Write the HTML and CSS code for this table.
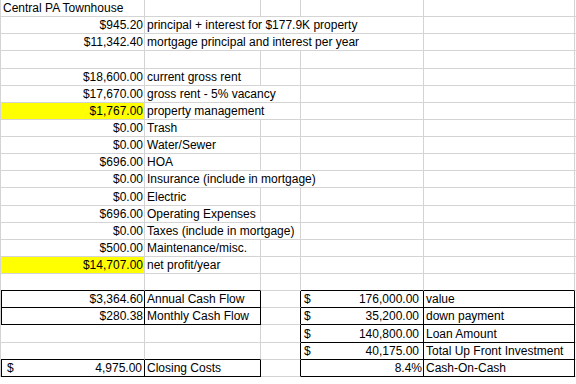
FILE: index.html
```html
<!DOCTYPE html>
<html>
<head>
  <title>Central PA Townhouse</title>
  <link rel="stylesheet" href="styles.css">
</head>
<body>
  <div class="sheet">
    <!-- row 1 -->
    <div class="c">Central PA Townhouse</div><div class="c"></div><div class="c"></div><div class="c"></div><div class="c"></div><div class="c edge"></div>
    <div class="c n">$945.20</div><div class="c span3">principal + interest for $177.9K property</div><div class="c"></div><div class="c edge"></div>
    <div class="c n">$11,342.40</div><div class="c span3">mortgage principal and interest per year</div><div class="c"></div><div class="c edge"></div>
    <div class="c"></div><div class="c"></div><div class="c"></div><div class="c"></div><div class="c"></div><div class="c edge"></div>

    <!-- income -->
    <div class="c n">$18,600.00</div><div class="c">current gross rent</div><div class="c"></div><div class="c"></div><div class="c"></div><div class="c edge"></div>
    <div class="c n">$17,670.00</div><div class="c span2">gross rent - 5% vacancy</div><div class="c"></div><div class="c"></div><div class="c edge"></div>
    <div class="c n hl">$1,767.00</div><div class="c span2">property management</div><div class="c"></div><div class="c"></div><div class="c edge"></div>

    <!-- expenses -->
    <div class="c n">$0.00</div><div class="c">Trash</div><div class="c"></div><div class="c"></div><div class="c"></div><div class="c edge"></div>
    <div class="c n">$0.00</div><div class="c">Water/Sewer</div><div class="c"></div><div class="c"></div><div class="c"></div><div class="c edge"></div>
    <div class="c n">$696.00</div><div class="c">HOA</div><div class="c"></div><div class="c"></div><div class="c"></div><div class="c edge"></div>
    <div class="c n">$0.00</div><div class="c span3">Insurance (include in mortgage)</div><div class="c"></div><div class="c edge"></div>
    <div class="c n">$0.00</div><div class="c">Electric</div><div class="c"></div><div class="c"></div><div class="c"></div><div class="c edge"></div>
    <div class="c n">$696.00</div><div class="c">Operating Expenses</div><div class="c"></div><div class="c"></div><div class="c"></div><div class="c edge"></div>
    <div class="c n">$0.00</div><div class="c span2">Taxes (include in mortgage)</div><div class="c"></div><div class="c"></div><div class="c edge"></div>
    <div class="c n">$500.00</div><div class="c">Maintenance/misc.</div><div class="c"></div><div class="c"></div><div class="c"></div><div class="c edge"></div>
    <div class="c n hl">$14,707.00</div><div class="c">net profit/year</div><div class="c"></div><div class="c"></div><div class="c"></div><div class="c edge"></div>
    <div class="c kt"></div><div class="c kt"></div><div class="c"></div><div class="c kt"></div><div class="c kt"></div><div class="c edge"></div>

    <!-- cash flow / investment boxes -->
    <div class="c n k kx">$3,364.60</div><div class="c k">Annual Cash Flow</div><div class="c kl"></div>
    <div class="c acct k"><span>$</span><span>176,000.00</span></div><div class="c k">value</div><div class="c edge"></div>

    <div class="c n k kx">$280.38</div><div class="c k">Monthly Cash Flow</div><div class="c kl"></div>
    <div class="c acct k"><span>$</span><span>35,200.00</span></div><div class="c k">down payment</div><div class="c edge"></div>

    <div class="c"></div><div class="c"></div><div class="c kl"></div>
    <div class="c acct k"><span>$</span><span>140,800.00</span></div><div class="c k">Loan Amount</div><div class="c edge"></div>

    <div class="c kt"></div><div class="c kt"></div><div class="c kl"></div>
    <div class="c acct k"><span>$</span><span>40,175.00</span></div><div class="c k">Total Up Front Investment</div><div class="c edge"></div>

    <div class="c acct acct-a k kx"><span>$</span><span>4,975.00</span></div><div class="c k">Closing Costs</div><div class="c kl"></div>
    <div class="c n k">8.4%</div><div class="c k">Cash-On-Cash</div><div class="c edge"></div>
  </div>
</body>
</html>
```

FILE: styles.css
```css
body {
  margin: 0;
  background-color: #fff;
  color: #000;
  font-family: "Liberation Sans", Arial, sans-serif;
  font-size: 12px;
}

/* worksheet grid, columns A..F */
.sheet {
  display: grid;
  grid-template-columns: 144px 116px 40px 123px 151px 1fr;
  grid-auto-rows: 17.14px;
  width: 575px;
  border-left: 1px solid #d4d4d4;
}

.c {
  display: flex;
  align-items: flex-end;
  padding: 0 2px;
  line-height: 15px;
  white-space: nowrap;
  overflow: hidden;
  border-right: 1px solid #d4d4d4;
  border-bottom: 1px solid #d4d4d4;
}
.edge {
  border-right: none;
}

.n {
  justify-content: flex-end;
  padding-right: 1px;
}
.acct {
  justify-content: space-between;
  padding-left: 3px;
  padding-right: 4px;
}
.acct-a {
  padding-left: 5px;
  padding-right: 2px;
}

.span2 {
  grid-column: span 2;
}
.span3 {
  grid-column: span 3;
}

.hl {
  background-color: #ffff00;
}

/* black cell borders */
.k {
  border-right-color: #000;
  border-bottom-color: #000;
}
.kt {
  border-bottom-color: #000;
}
.kl {
  border-right-color: #000;
}
.kx {
  border-left: 1px solid #000;
}
```
